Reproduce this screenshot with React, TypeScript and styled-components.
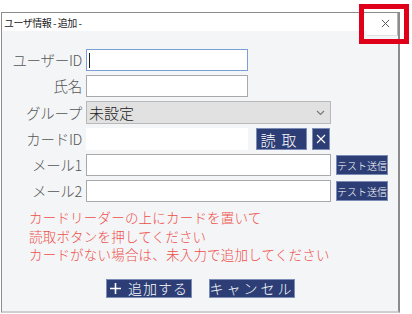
import styled, { createGlobalStyle } from "styled-components";

const GlobalStyle = createGlobalStyle`
  html, body {
    margin: 0;
    padding: 0;
    background: #ffffff;
  }
  body {
    font-family: "Noto Sans CJK JP", "Noto Sans", sans-serif;
    color: #333;
  }
`

const Page = styled.div`
  position: relative;
  width: 412px;
  height: 314px;
  padding: 12px 0 0 1px;
  box-sizing: border-box;
  overflow: hidden;
`

const Dialog = styled.div`
  width: 399px;
  box-sizing: border-box;
  border-top: 1px solid #8c8c8c;
  border-left: 1px solid #8c8c8c;
  border-right: 2px solid #8c8c8c;
  border-bottom: 2px solid #cfcfcf;
  background: #f4f5f7;
`

const TitleBar = styled.div`
  position: relative;
  height: 18px;
  display: flex;
  align-items: center;
  padding-left: 2px;
  background: #ffffff;
  font-size: 10px;
  color: #222;
  letter-spacing: -0.5px;
`

const CloseButton = styled.div`
  position: absolute;
  top: 0;
  right: 0;
  width: 31px;
  height: 23px;
  display: flex;
  align-items: center;
  justify-content: center;
  padding: 0 0 2px 6px;
  box-sizing: border-box;
  background: #ffffff;
  border-right: 1px solid #b5b5b5;
  border-bottom: 1px solid #e2e2e2;
  color: #555;
`

const Highlight = styled.div`
  position: absolute;
  left: 359px;
  top: 4px;
  width: 50px;
  height: 40px;
  box-sizing: border-box;
  border: 5px solid #e0001a;
`

const Body = styled.div`
  padding: 18px 0 13px 1px;
`

const Form = styled.div`
  display: grid;
  grid-template-columns: 79px 1fr;
  column-gap: 4px;
  row-gap: 4px;
  align-items: center;
`

const Label = styled.div`
  text-align: right;
  font-size: 14.5px;
  font-weight: 300;
  color: #555;
  line-height: 22px;
  letter-spacing: -0.3px;
  white-space: nowrap;
`

const FieldRow = styled.div<{ $gap?: number }>`
  display: flex;
  align-items: center;
  gap: ${p => p.$gap ?? 5}px;
`

const TextBox = styled.div<{ $width: number; $focused?: boolean; $plain?: boolean }>`
  position: relative;
  width: ${p => p.$width}px;
  height: 22px;
  box-sizing: border-box;
  background: #ffffff;
  border: ${p => (p.$plain ? "none" : `1px solid ${p.$focused ? "#7b9fd4" : "#a9a9a9"}`)};
`

const Caret = styled.span`
  position: absolute;
  left: 2px;
  top: 3px;
  width: 1px;
  height: 15px;
  background: #222;
`

const Select = styled.div`
  width: 245px;
  height: 23px;
  box-sizing: border-box;
  display: flex;
  align-items: center;
  justify-content: space-between;
  padding: 0 5px 0 2px;
  background: #e1e1e1;
  border: 1px solid #b9b9b9;
  font-size: 15px;
  font-weight: 300;
  color: #222;
`

const NavyButton = styled.div<{ $width: number; $height: number; $size: number; $spacing?: number }>`
  width: ${p => p.$width}px;
  height: ${p => p.$height}px;
  box-sizing: border-box;
  display: flex;
  align-items: center;
  justify-content: center;
  gap: 7px;
  background: #2c3e75;
  border: 1px solid #7d8cb4;
  color: #ffffff;
  font-size: ${p => p.$size}px;
  font-weight: 300;
  letter-spacing: ${p => p.$spacing ?? 0}px;
  white-space: nowrap;
`

const Notice = styled.div`
  margin: 6px 0 0 26px;
  color: #ee4f4a;
  font-size: 13.5px;
  font-weight: 300;
  line-height: 18.5px;
  letter-spacing: 0.2px;
`

const Actions = styled.div`
  display: flex;
  justify-content: center;
  gap: 17px;
  margin-top: 15px;
`

function Chevron() {
  return (
    <svg width="9" height="6" viewBox="0 0 9 6">
      <path d="M1 1 L4.5 4.5 L8 1" fill="none" stroke="#777" strokeWidth="1.2" />
    </svg>
  )
}

function Cross({ size }: { size: number }) {
  return (
    <svg width={size} height={size} viewBox="0 0 10 10">
      <path d="M1 1 L9 9 M9 1 L1 9" stroke="currentColor" strokeWidth="1.1" />
    </svg>
  )
}

function Plus() {
  return (
    <svg width="11" height="11" viewBox="0 0 11 11">
      <path d="M5.5 0 V11 M0 5.5 H11" stroke="#fff" strokeWidth="1.6" />
    </svg>
  )
}

export default function App() {
  return (
    <Page>
      <GlobalStyle />
      <Dialog>
        <TitleBar>
          ユーザ情報 - 追加 -
          <CloseButton>
            <Cross size={9} />
          </CloseButton>
        </TitleBar>
        <Body>
          <Form>
            <Label>ユーザーID</Label>
            <FieldRow>
              <TextBox $width={162} $focused>
                <Caret />
              </TextBox>
            </FieldRow>

            <Label>氏名</Label>
            <FieldRow>
              <TextBox $width={162} />
            </FieldRow>

            <Label>グループ</Label>
            <FieldRow>
              <Select>
                未設定
                <Chevron />
              </Select>
            </FieldRow>

            <Label>カードID</Label>
            <FieldRow $gap={5}>
              <TextBox $width={162} $plain />
              <NavyButton $width={51} $height={22} $size={15} $spacing={6} style={{ marginLeft: 3 }}>
                読取
              </NavyButton>
              <NavyButton $width={18} $height={22} $size={14}>
                <Cross size={10} />
              </NavyButton>
            </FieldRow>

            <Label>メール1</Label>
            <FieldRow>
              <TextBox $width={245} />
              <NavyButton $width={52} $height={20} $size={10}>テスト送信</NavyButton>
            </FieldRow>

            <Label>メール2</Label>
            <FieldRow>
              <TextBox $width={245} />
              <NavyButton $width={52} $height={20} $size={10}>テスト送信</NavyButton>
            </FieldRow>
          </Form>

          <Notice>
            カードリーダーの上にカードを置いて
            <br />
            読取ボタンを押してください
            <br />
            カードがない場合は、未入力で追加してください
          </Notice>

          <Actions>
            <NavyButton $width={86} $height={19} $size={14} $spacing={1}>
              <Plus />
              追加する
            </NavyButton>
            <NavyButton $width={86} $height={19} $size={14} $spacing={3}>
              キャンセル
            </NavyButton>
          </Actions>
        </Body>
      </Dialog>
      <Highlight />
    </Page>
  )
}
